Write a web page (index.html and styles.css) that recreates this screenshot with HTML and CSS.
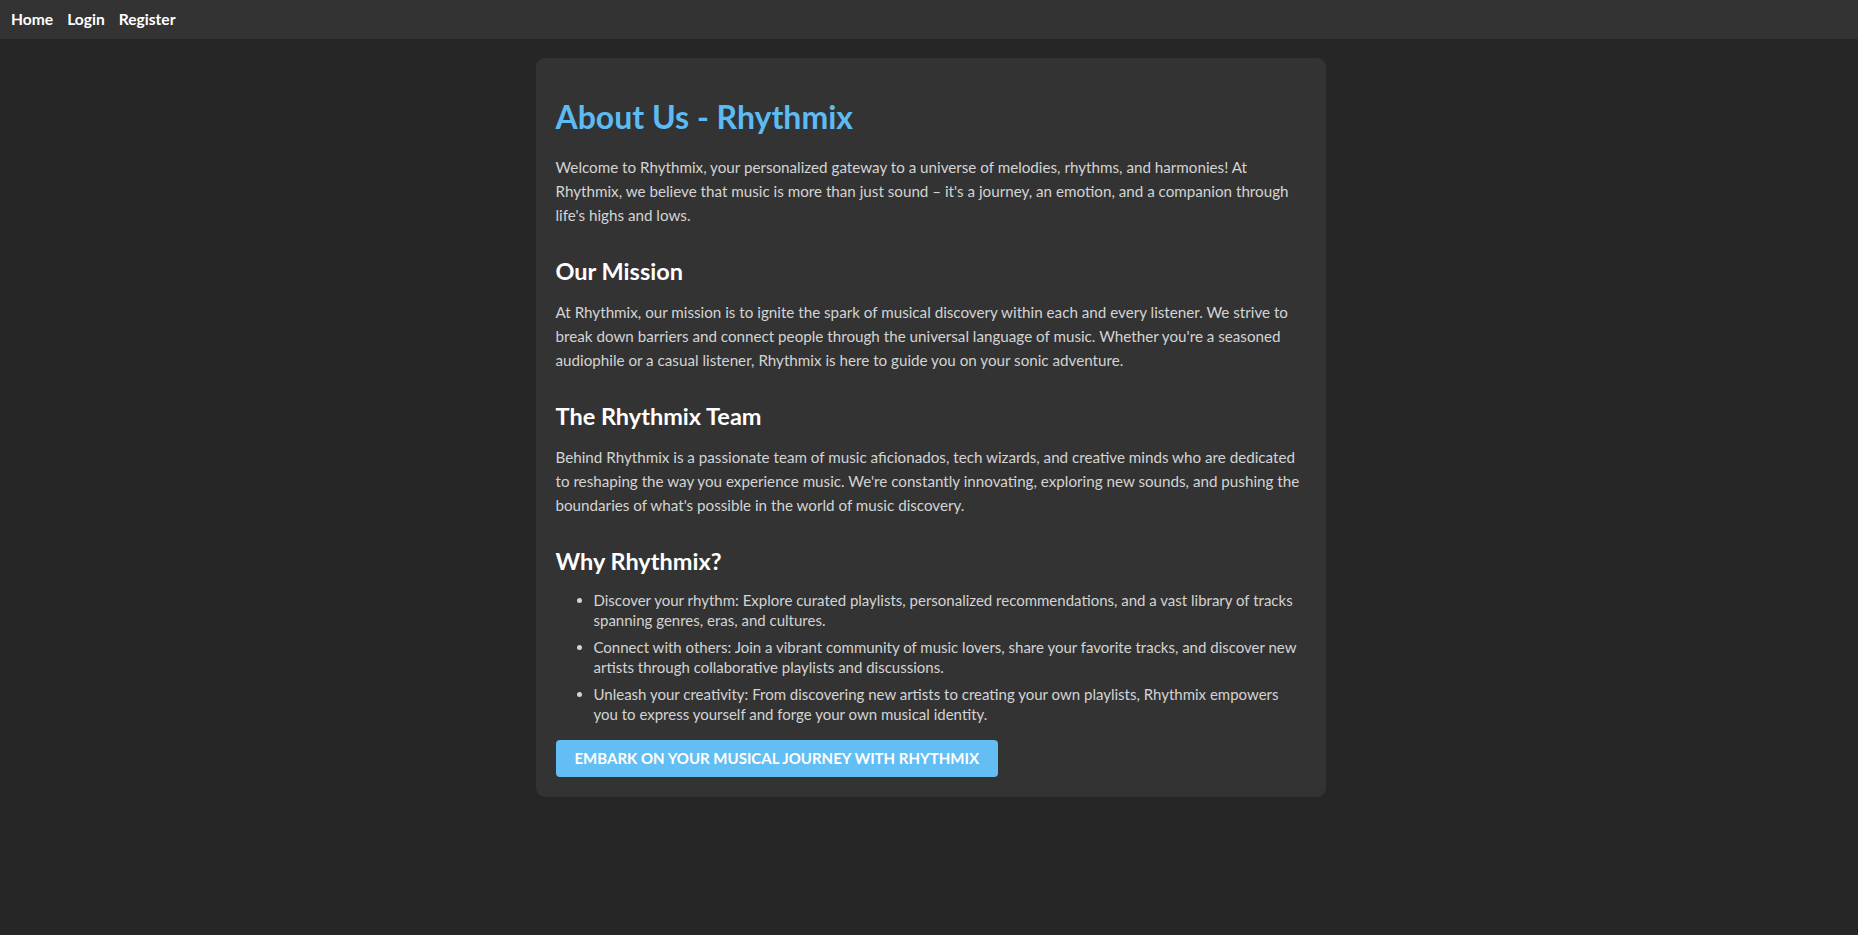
FILE: index.html
```html
<!DOCTYPE html>
<html lang="en">
<head>
<meta charset="utf-8">
<title>About Us - Rhythmix</title>
<link rel="stylesheet" href="styles.css">
</head>
<body>
<nav class="topnav">
  <a href="#" class="navlink">Home</a>
  <a href="#" class="navlink">Login</a>
  <a href="#" class="navlink">Register</a>
</nav>
<div class="page">
<main class="card">
  <h1 class="title">About Us - Rhythmix</h1>
  <p class="text">Welcome to Rhythmix, your personalized gateway to a universe of melodies, rhythms, and harmonies! At Rhythmix, we believe that music is more than just sound – it's a journey, an emotion, and a companion through life's highs and lows.</p>
  <h2 class="subtitle">Our Mission</h2>
  <p class="text">At Rhythmix, our mission is to ignite the spark of musical discovery within each and every listener. We strive to break down barriers and connect people through the universal language of music. Whether you're a seasoned audiophile or a casual listener, Rhythmix is here to guide you on your sonic adventure.</p>
  <h2 class="subtitle">The Rhythmix Team</h2>
  <p class="text">Behind Rhythmix is a passionate team of music aficionados, tech wizards, and creative minds who are dedicated to reshaping the way you experience music. We're constantly innovating, exploring new sounds, and pushing the boundaries of what's possible in the world of music discovery.</p>
  <h2 class="subtitle">Why Rhythmix?</h2>
  <ul class="list">
    <li class="item">Discover your rhythm: Explore curated playlists, personalized recommendations, and a vast library of tracks spanning genres, eras, and cultures.</li>
    <li class="item">Connect with others: Join a vibrant community of music lovers, share your favorite tracks, and discover new artists through collaborative playlists and discussions.</li>
    <li class="item">Unleash your creativity: From discovering new artists to creating your own playlists, Rhythmix empowers you to express yourself and forge your own musical identity.</li>
  </ul>
  <a href="#" class="cta">Embark on your musical journey with Rhythmix</a>
</main>
</div>
</body>
</html>
```
FILE: styles.css
```css
html, body { margin: 0; padding: 0; }
body {
  background: #262626;
  color: #d4d4d4;
  font-family: Lato, "Noto Sans", sans-serif;
  font-size: 16px;
}
.topnav {
  background: #333333;
  height: 39px;
  display: flex;
  align-items: center;
  gap: 14px;
  padding: 0 11px 1px;
  box-sizing: border-box;
}
.navlink {
  color: #ffffff;
  text-decoration: none;
  font-weight: 700;
  font-size: 15.6px;
}
.page {
  padding: 19px 0 0 3px;
}
.card {
  display: block;
  max-width: 750px;
  margin: 0 auto;
  padding: 20px;
  background: #333333;
  border-radius: 9px;
}
.title {
  color: #5dbbf3;
  font-size: 32px;
  line-height: 40px;
  margin: 19px 0 18px;
}
.subtitle {
  color: #ffffff;
  font-size: 23.5px;
  line-height: 32px;
  margin: 28px 0 13px;
}
.text {
  font-size: 15.2px;
  line-height: 24px;
  margin: 0;
}
.list {
  margin: 14px 0 16px;
  padding-left: 38px;
}
.item {
  font-size: 15px;
  line-height: 19.5px;
  margin-bottom: 8px;
}
.cta {
  display: inline-block;
  background: #63bef4;
  color: #ffffff;
  text-transform: uppercase;
  font-weight: 700;
  font-size: 15px;
  line-height: 37px;
  padding: 0 19px;
  border-radius: 4px;
  text-decoration: none;
}
```
